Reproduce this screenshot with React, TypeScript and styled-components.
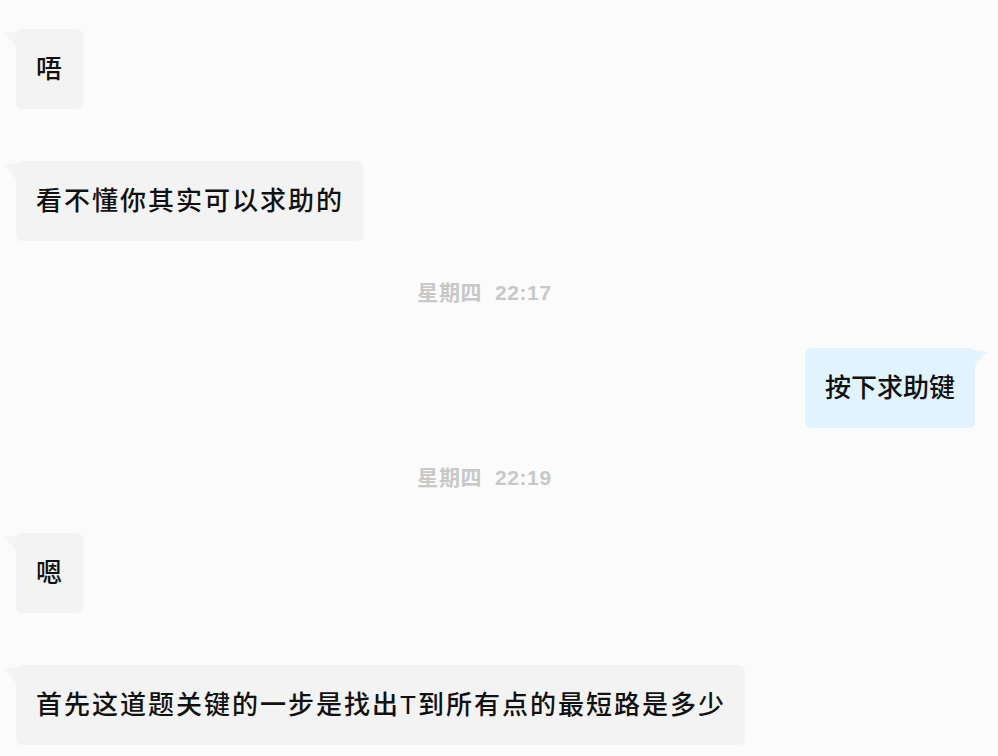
import React from "react";
import styled, { createGlobalStyle } from "styled-components";

const Global = createGlobalStyle`
  html, body { margin: 0; padding: 0; background: #fbfbfb; }
  body { font-family: "Liberation Sans", "Noto Sans CJK SC", sans-serif; }
`;

const Chat = styled.div`
  display: flex;
  flex-direction: column;
  padding: 29px 23px 0 16px;
  width: 998px;
  box-sizing: border-box;
`;

const Row = styled.div<{ $mine?: boolean; $gap: number }>`
  display: flex;
  justify-content: ${(p) => (p.$mine ? "flex-end" : "flex-start")};
  margin-top: ${(p) => p.$gap}px;
`;

const Bubble = styled.div<{ $mine?: boolean }>`
  position: relative;
  background: ${(p) => (p.$mine ? "#e1f3fe" : "#f3f3f3")};
  color: #111;
  font-family: "Liberation Sans", "Noto Sans CJK SC", sans-serif;
  font-size: 26px;
  font-weight: 500;
  letter-spacing: ${(p) => (p.$mine ? "0px" : "2px")};
  line-height: 40px;
  padding: 20px ${(p) => (p.$mine ? "20px" : "19px")} 20px 20px;
  border-radius: 6px;
`;

const Tail = styled.svg<{ $mine?: boolean }>`
  position: absolute;
  top: 2px;
  ${(p) => (p.$mine ? "right: -13px; transform: scaleX(-1);" : "left: -13px;")}
  width: 14px;
  height: 20px;
  opacity: 0.8;
`;

const Stamp = styled.div<{ $gap: number }>`
  margin-top: ${(p) => p.$gap}px;
  margin-right: 22px;
  text-align: center;
  font-family: "Liberation Sans", "Noto Sans CJK SC", sans-serif;
  font-weight: bold;
  font-size: 21px;
  letter-spacing: 0.6px;
  line-height: 30px;
  color: #c8c8c8;
  white-space: pre;
`;

type Item =
  | { kind: "msg"; text: string; mine?: boolean; gap: number }
  | { kind: "time"; text: string; gap: number };

const items: Item[] = [
  { kind: "msg", text: "唔", gap: 0 },
  { kind: "msg", text: "看不懂你其实可以求助的", gap: 52 },
  { kind: "time", text: "星期四  22:17", gap: 37 },
  { kind: "msg", text: "按下求助键", mine: true, gap: 40 },
  { kind: "time", text: "星期四  22:19", gap: 35 },
  { kind: "msg", text: "嗯", gap: 40 },
  { kind: "msg", text: "首先这道题关键的一步是找出T到所有点的最短路是多少", gap: 52 },
];

function Message({ text, mine, gap }: { text: string; mine?: boolean; gap: number }) {
  return (
    <Row $mine={mine} $gap={gap}>
      <Bubble $mine={mine}>
        <Tail $mine={mine} viewBox="0 0 14 20">
          <path d="M14 0 L0 2 Q8 8 14 18 Z" fill={mine ? "#e1f3fe" : "#f3f3f3"} />
        </Tail>
        {text}
      </Bubble>
    </Row>
  );
}

export default function App() {
  return (
    <>
      <Global />
      <Chat>
        {items.map((it, i) =>
          it.kind === "msg" ? (
            <Message key={i} text={it.text} mine={it.mine} gap={it.gap} />
          ) : (
            <Stamp key={i} $gap={it.gap}>
              {it.text}
            </Stamp>
          )
        )}
      </Chat>
    </>
  );
}
